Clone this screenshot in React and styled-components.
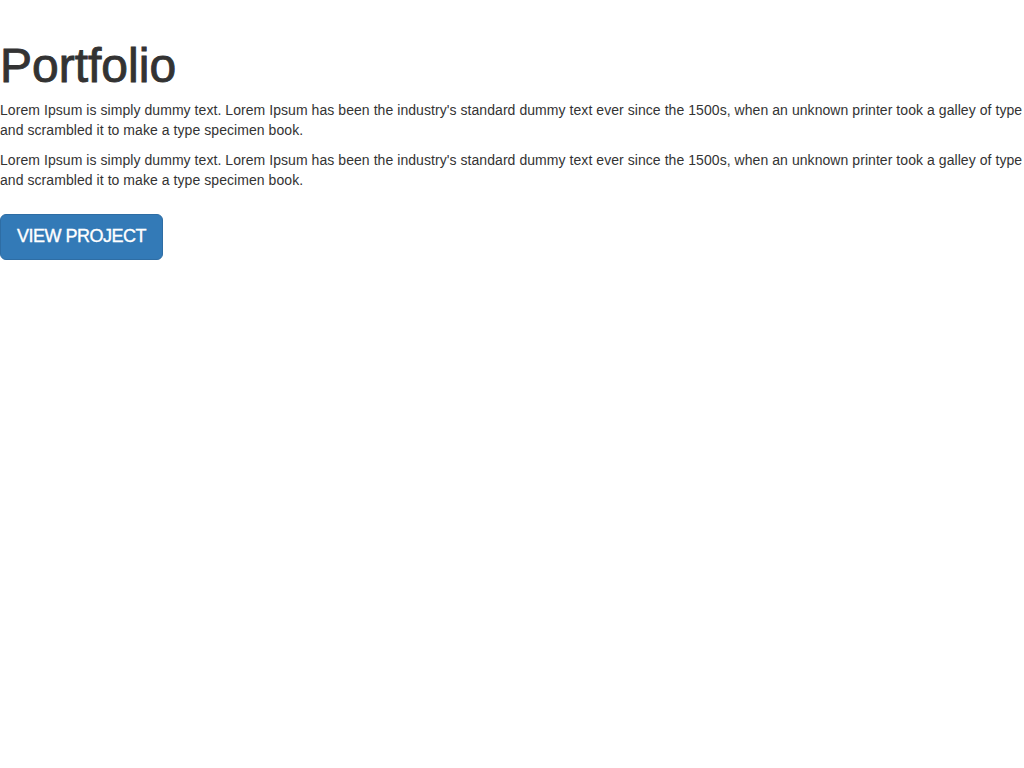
import React from "react";
import styled, { createGlobalStyle } from "styled-components";

const GlobalStyle = createGlobalStyle`
  body {
    margin: 0;
    background: #fff;
    color: #333;
    font-family: "Liberation Sans", Arial, sans-serif;
    font-size: 14px;
    line-height: 1.42857;
  }
`;

const Section = styled.div`
  width: 100%;
  padding-top: 10px;
`;

const Title = styled.h1`
  font-size: 48px;
  font-weight: 500;
  line-height: 1.1;
  margin: 30px 0 8px;
  color: #333;
  -webkit-text-stroke: 0.9px #333;
`;

const Text = styled.p`
  margin: 0 0 10px;
  letter-spacing: 0.06px;
`;

const Button = styled.a`
  display: inline-block;
  margin-top: 13px;
  padding: 10px 16px;
  font-size: 18px;
  line-height: 1.3333;
  letter-spacing: -0.5px;
  border-radius: 6px;
  color: #fff;
  background-color: #337ab7;
  border: 1px solid #2e6da4;
  text-decoration: none;
  cursor: pointer;
  -webkit-text-stroke: 0.35px #fff;
`;

export default function App() {
  const lorem =
    "Lorem Ipsum is simply dummy text. Lorem Ipsum has been the industry's standard dummy text ever since the 1500s, when an unknown printer took a galley of type and scrambled it to make a type specimen book.";
  return (
    <>
      <GlobalStyle />
      <Section>
        <Title>Portfolio</Title>
        <Text>{lorem}</Text>
        <Text>{lorem}</Text>
        <Button>VIEW PROJECT</Button>
      </Section>
    </>
  );
}
